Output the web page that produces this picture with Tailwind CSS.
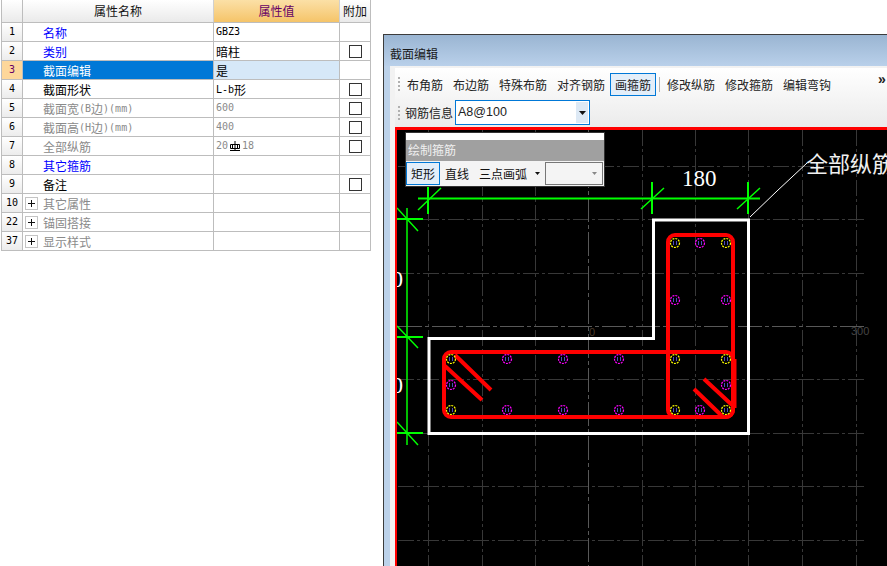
<!DOCTYPE html>
<html lang="zh">
<head>
<meta charset="utf-8">
<script src="https://cdn.jsdelivr.net/npm/@tailwindcss/browser@4"></script>
<title>截面编辑</title>
</head>
<body class="bg-white overflow-hidden">
<div class="w-[887px] h-[566px] overflow-hidden flex items-start font-['Noto_Sans_CJK_SC','Liberation_Sans',sans-serif] text-[12px] leading-none text-black">

  <!-- property table -->
  <div class="ml-px w-[370px] shrink-0 border-l border-[#bdbdbd]">
    <div class="flex h-[23px] border-b border-[#bdbdbd] text-[#111]">
      <div class="w-[21px] border-r border-[#bdbdbd] bg-gradient-to-b from-white to-[#eaeaea]"></div>
      <div class="w-[191px] border-r border-[#d0d0d0] bg-gradient-to-b from-white to-[#eaeaea] flex items-center justify-center">属性名称</div>
      <div class="w-[126px] border-r border-[#d0d0d0] bg-gradient-to-b from-[#fbe0a6] to-[#f5c468] text-[#660066] flex items-center justify-center">属性值</div>
      <div class="w-[31px] border-r border-[#bdbdbd] bg-gradient-to-b from-white to-[#eaeaea] flex items-center justify-center">附加</div>
    </div>

    <div class="flex h-[19px] border-b border-[#bdbdbd]">
      <div class="w-[21px] border-r border-[#bdbdbd] bg-gradient-to-b from-white to-[#ececec] flex items-center justify-center font-['DejaVu_Sans_Mono',monospace] text-[10px]">1</div>
      <div class="w-[191px] border-r border-[#bdbdbd] pl-5 pt-px flex items-center text-[#0000ff]">名称</div>
      <div class="w-[126px] border-r border-[#bdbdbd] pl-0.5 flex items-center font-['DejaVu_Sans_Mono',monospace] text-[10px]">GBZ3</div>
      <div class="w-[31px] border-r border-[#bdbdbd]"></div>
    </div>
    <div class="flex h-[19px] border-b border-[#bdbdbd]">
      <div class="w-[21px] border-r border-[#bdbdbd] bg-gradient-to-b from-white to-[#ececec] flex items-center justify-center font-['DejaVu_Sans_Mono',monospace] text-[10px]">2</div>
      <div class="w-[191px] border-r border-[#bdbdbd] pl-5 pt-px flex items-center text-[#0000ff]">类别</div>
      <div class="w-[126px] border-r border-[#bdbdbd] pl-0.5 pt-px flex items-center">暗柱</div>
      <div class="w-[31px] border-r border-[#bdbdbd] flex items-center justify-center"><span class="block w-[13px] h-[13px] border border-[#333] bg-white"></span></div>
    </div>
    <div class="flex h-[19px] border-b border-[#bdbdbd]">
      <div class="w-[21px] border-r border-[#bdbdbd] bg-[#fdd79a] text-[#660066] flex items-center justify-center font-['DejaVu_Sans_Mono',monospace] text-[10px]">3</div>
      <div class="w-[191px] border-r border-[#bdbdbd] pl-5 pt-px flex items-center bg-[#0078d7] text-white">截面编辑</div>
      <div class="w-[126px] border-r border-[#bdbdbd] pl-0.5 pt-px flex items-center bg-[#d6e8f8]">是</div>
      <div class="w-[31px] border-r border-[#bdbdbd]"></div>
    </div>
    <div class="flex h-[19px] border-b border-[#bdbdbd]">
      <div class="w-[21px] border-r border-[#bdbdbd] bg-gradient-to-b from-white to-[#ececec] flex items-center justify-center font-['DejaVu_Sans_Mono',monospace] text-[10px]">4</div>
      <div class="w-[191px] border-r border-[#bdbdbd] pl-5 pt-px flex items-center">截面形状</div>
      <div class="w-[126px] border-r border-[#bdbdbd] pl-0.5 pt-px flex items-center"><span class="font-['DejaVu_Sans_Mono',monospace] text-[10px]">L-b</span>形</div>
      <div class="w-[31px] border-r border-[#bdbdbd] flex items-center justify-center"><span class="block w-[13px] h-[13px] border border-[#333] bg-white"></span></div>
    </div>
    <div class="flex h-[19px] border-b border-[#bdbdbd] text-[#8a8a8a]">
      <div class="w-[21px] border-r border-[#bdbdbd] bg-gradient-to-b from-white to-[#ececec] text-black flex items-center justify-center font-['DejaVu_Sans_Mono',monospace] text-[10px]">5</div>
      <div class="w-[191px] border-r border-[#bdbdbd] pl-5 pt-px flex items-center">截面宽<span class="font-['DejaVu_Sans_Mono',monospace] text-[10px]">(B</span>边<span class="font-['DejaVu_Sans_Mono',monospace] text-[10px]">)(mm)</span></div>
      <div class="w-[126px] border-r border-[#bdbdbd] pl-0.5 flex items-center font-['DejaVu_Sans_Mono',monospace] text-[10px]">600</div>
      <div class="w-[31px] border-r border-[#bdbdbd] flex items-center justify-center"><span class="block w-[13px] h-[13px] border border-[#333] bg-white"></span></div>
    </div>
    <div class="flex h-[19px] border-b border-[#bdbdbd] text-[#8a8a8a]">
      <div class="w-[21px] border-r border-[#bdbdbd] bg-gradient-to-b from-white to-[#ececec] text-black flex items-center justify-center font-['DejaVu_Sans_Mono',monospace] text-[10px]">6</div>
      <div class="w-[191px] border-r border-[#bdbdbd] pl-5 pt-px flex items-center">截面高<span class="font-['DejaVu_Sans_Mono',monospace] text-[10px]">(H</span>边<span class="font-['DejaVu_Sans_Mono',monospace] text-[10px]">)(mm)</span></div>
      <div class="w-[126px] border-r border-[#bdbdbd] pl-0.5 flex items-center font-['DejaVu_Sans_Mono',monospace] text-[10px]">400</div>
      <div class="w-[31px] border-r border-[#bdbdbd] flex items-center justify-center"><span class="block w-[13px] h-[13px] border border-[#333] bg-white"></span></div>
    </div>
    <div class="flex h-[19px] border-b border-[#bdbdbd] text-[#8a8a8a]">
      <div class="w-[21px] border-r border-[#bdbdbd] bg-gradient-to-b from-white to-[#ececec] text-black flex items-center justify-center font-['DejaVu_Sans_Mono',monospace] text-[10px]">7</div>
      <div class="w-[191px] border-r border-[#bdbdbd] pl-5 pt-px flex items-center">全部纵筋</div>
      <div class="w-[126px] border-r border-[#bdbdbd] pl-0.5 flex items-center font-['DejaVu_Sans_Mono',monospace] text-[10px]">20<svg class="mx-0.5" width="10" height="11" viewBox="0 0 10 11"><path d="M0.500 3.500H9.500V7.500H0.500ZM5 0V9M2.500 3.500V7.500M7.500 3.500V7.500M0 9.500H10" fill="none" stroke="#000" stroke-width="1"/></svg>18</div>
      <div class="w-[31px] border-r border-[#bdbdbd] flex items-center justify-center"><span class="block w-[13px] h-[13px] border border-[#333] bg-white"></span></div>
    </div>
    <div class="flex h-[19px] border-b border-[#bdbdbd]">
      <div class="w-[21px] border-r border-[#bdbdbd] bg-gradient-to-b from-white to-[#ececec] flex items-center justify-center font-['DejaVu_Sans_Mono',monospace] text-[10px]">8</div>
      <div class="w-[191px] border-r border-[#bdbdbd] pl-5 pt-px flex items-center text-[#0000ff]">其它箍筋</div>
      <div class="w-[126px] border-r border-[#bdbdbd]"></div>
      <div class="w-[31px] border-r border-[#bdbdbd]"></div>
    </div>
    <div class="flex h-[19px] border-b border-[#bdbdbd]">
      <div class="w-[21px] border-r border-[#bdbdbd] bg-gradient-to-b from-white to-[#ececec] flex items-center justify-center font-['DejaVu_Sans_Mono',monospace] text-[10px]">9</div>
      <div class="w-[191px] border-r border-[#bdbdbd] pl-5 pt-px flex items-center">备注</div>
      <div class="w-[126px] border-r border-[#bdbdbd]"></div>
      <div class="w-[31px] border-r border-[#bdbdbd] flex items-center justify-center"><span class="block w-[13px] h-[13px] border border-[#333] bg-white"></span></div>
    </div>
    <div class="flex h-[19px] border-b border-[#bdbdbd] text-[#8a8a8a]">
      <div class="w-[21px] border-r border-[#bdbdbd] bg-gradient-to-b from-white to-[#ececec] text-black flex items-center justify-center font-['DejaVu_Sans_Mono',monospace] text-[10px]">10</div>
      <div class="w-[191px] border-r border-[#bdbdbd] pl-0.5 flex items-center gap-[5px]"><svg width="13" height="13" viewBox="0 0 13 13"><rect x=".5" y=".5" width="12" height="12" fill="#fff" stroke="#c4c4c4"/><path d="M3 6.500H10M6.500 3V10" stroke="#111"/></svg><span class="pt-px">其它属性</span></div>
      <div class="w-[126px] border-r border-[#bdbdbd]"></div>
      <div class="w-[31px] border-r border-[#bdbdbd]"></div>
    </div>
    <div class="flex h-[19px] border-b border-[#bdbdbd] text-[#8a8a8a]">
      <div class="w-[21px] border-r border-[#bdbdbd] bg-gradient-to-b from-white to-[#ececec] text-black flex items-center justify-center font-['DejaVu_Sans_Mono',monospace] text-[10px]">22</div>
      <div class="w-[191px] border-r border-[#bdbdbd] pl-0.5 flex items-center gap-[5px]"><svg width="13" height="13" viewBox="0 0 13 13"><rect x=".5" y=".5" width="12" height="12" fill="#fff" stroke="#c4c4c4"/><path d="M3 6.500H10M6.500 3V10" stroke="#111"/></svg><span class="pt-px">锚固搭接</span></div>
      <div class="w-[126px] border-r border-[#bdbdbd]"></div>
      <div class="w-[31px] border-r border-[#bdbdbd]"></div>
    </div>
    <div class="flex h-[19px] border-b border-[#bdbdbd] text-[#8a8a8a]">
      <div class="w-[21px] border-r border-[#bdbdbd] bg-gradient-to-b from-white to-[#ececec] text-black flex items-center justify-center font-['DejaVu_Sans_Mono',monospace] text-[10px]">37</div>
      <div class="w-[191px] border-r border-[#bdbdbd] pl-0.5 flex items-center gap-[5px]"><svg width="13" height="13" viewBox="0 0 13 13"><rect x=".5" y=".5" width="12" height="12" fill="#fff" stroke="#c4c4c4"/><path d="M3 6.500H10M6.500 3V10" stroke="#111"/></svg><span class="pt-px">显示样式</span></div>
      <div class="w-[126px] border-r border-[#bdbdbd]"></div>
      <div class="w-[31px] border-r border-[#bdbdbd]"></div>
    </div>
  </div>

  <!-- section editor window -->
  <div class="ml-[12px] mt-[34px] w-[504px] h-[532px] shrink-0 border-l border-t border-[#3c3c3c] flex flex-col">
    <div class="h-[31px] shrink-0 bg-gradient-to-b from-[#9ab5d2] to-[#b9d0ea] pl-[6px] pt-[6px] flex items-center text-[#1a1a1a]">截面编辑</div>
    <div class="flex-1 min-h-0 flex bg-[#bcd2ea] pl-[6px]">
      <div class="flex-1 min-w-0 flex flex-col bg-[#f2f2f2] pt-[2px] pl-[5px]">
        <!-- toolbars -->
        <div class="h-[59px] shrink-0 bg-gradient-to-b from-white to-[#ebebeb] text-[#222] flex flex-col">
          <div class="h-[32px] flex items-center relative">
            <svg class="ml-[3px] mr-[6px]" width="3" height="16" viewBox="0 0 3 16"><path d="M1 1V15" stroke="#b0b0b0" stroke-width="2" stroke-dasharray="2 2"/></svg>
            <span class="w-[46px] pt-px">布角筋</span>
            <span class="w-[46px] pt-px">布边筋</span>
            <span class="w-[58px] pt-px">特殊布筋</span>
            <span class="w-[53px] pt-px">对齐钢筋</span>
            <span class="w-[46px] h-[23px] pt-px border border-[#0078d7] bg-[#e3eef9] flex items-center justify-center">画箍筋</span>
            <span class="ml-[3px] mr-[7px] w-px h-[15px] bg-[#b5b5b5]"></span>
            <span class="w-[58px] pt-px">修改纵筋</span>
            <span class="w-[58px] pt-px">修改箍筋</span>
            <span class="w-[58px] pt-px">编辑弯钩</span>
            <span class="absolute left-[483px] top-[4px] text-[14px] font-bold font-['Liberation_Sans',sans-serif]">»</span>
          </div>
          <div class="h-[25px] flex items-center">
            <svg class="ml-[3px] mr-[4px]" width="3" height="16" viewBox="0 0 3 16"><path d="M1 1V15" stroke="#b0b0b0" stroke-width="2" stroke-dasharray="2 2"/></svg>
            <span class="w-[50px] text-[12px]">钢筋信息</span>
            <div class="w-[135px] h-[25px] border border-[#0078d7] bg-white flex items-center justify-between pl-[2px] font-['Liberation_Sans',sans-serif] text-[12.5px]">
              A8@100
              <span class="w-[12px] h-[21px] mr-px bg-[#dde9f5] flex items-center justify-center"><svg width="7" height="4" viewBox="0 0 7 4"><path d="M0 0H7L3.500 4Z" fill="#111"/></svg></span>
            </div>
          </div>
        </div>
        <!-- drawing canvas -->
        <div class="flex-1 min-h-0 relative border-l-2 border-t-[3px] border-[#ff0000] bg-black">
          <svg class="block" width="490" height="436" viewBox="397 130 490 436">
            <g stroke="#383838" stroke-width="1" stroke-dasharray="16 3 3 3" shape-rendering="crispEdges" fill="none">
              <path d="M428.500 130V566M482.500 130V566M535.500 130V566M642.500 130V566M695.500 130V566M748.500 130V566M802.500 130V566M856.500 130V566"/>
              <path d="M398 166.500H864M398 219.500H864M398 273.500H864M398 379.500H864M398 433.500H864M398 486.500H864M398 540.500H864"/>
            </g>
            <g stroke="#585858" stroke-width="1" stroke-dasharray="24 3 4 3" shape-rendering="crispEdges" fill="none">
              <path d="M588.500 130V566"/>
              <path d="M398 326.500H864"/>
            </g>
            <text x="589" y="336" fill="#4a3a2a" font-size="11" font-family="Liberation Sans">0</text>
            <text x="851" y="335" fill="#444" font-size="11" font-family="Liberation Sans">300</text>

            <!-- section outline -->
            <path d="M429 338.500H653.500V220H748.500V433.500H429Z" fill="none" stroke="#fff" stroke-width="3"/>

            <!-- dimensions -->
            <g stroke="#00ff00" fill="none">
              <path d="M418 198.500H760" stroke-width="2"/>
              <path d="M428 186V214M652 182V214M748 182V214" stroke-width="2"/>
              <path d="M418 210L441 188M641 209L664 188M737 209L760 188" stroke-width="1.500"/>
              <path d="M407 208V445" stroke-width="1.500"/>
              <path d="M397 219H423M397 337H423M397 433H423" stroke-width="2"/>
              <path d="M397 208L418 231M397 326L418 348M397 422L418 445" stroke-width="1.500"/>
            </g>
            <path d="M750 217L777 191L807 163" fill="none" stroke="#fff" stroke-width="1"/>
            <text x="682" y="186" fill="#fff" font-size="23" font-family="Liberation Serif">180</text>
            <text x="806" y="172" fill="#f0f0f0" font-size="22" font-family="Noto Sans CJK SC,serif">全部纵筋</text>
            <text x="391.500" y="287" fill="#fff" font-size="23" font-family="Liberation Serif">0</text>
            <text x="391.500" y="393" fill="#fff" font-size="23" font-family="Liberation Serif">0</text>

            <!-- stirrups -->
            <g fill="none" stroke="#ff0000" stroke-width="4">
              <rect x="668" y="235" width="65" height="182" rx="7"/>
              <rect x="444" y="352" width="289" height="65" rx="7"/>
              <path d="M734.500 359V408"/>
              <path d="M455 355L491 390M445 366L482 400"/>
              <path d="M704 379L732 405M694 389L722 416"/>
            </g>

            <!-- bars -->
            <g fill="none" stroke="#ffff00" stroke-width="1.200" stroke-dasharray="2 1">
              <circle cx="451" cy="359" r="4.500"/><circle cx="451" cy="410" r="4.500"/>
              <circle cx="675" cy="243" r="4.500"/><circle cx="726" cy="243" r="4.500"/>
              <circle cx="675" cy="359" r="4.500"/><circle cx="726" cy="359" r="4.500"/>
              <circle cx="675" cy="410" r="4.500"/><circle cx="726" cy="410" r="4.500"/>
            </g>
            <g fill="none" stroke="#ff00ff" stroke-width="1.200" stroke-dasharray="2 1">
              <circle cx="507" cy="359" r="4.500"/><circle cx="563" cy="359" r="4.500"/><circle cx="619" cy="359" r="4.500"/>
              <circle cx="507" cy="410" r="4.500"/><circle cx="563" cy="410" r="4.500"/><circle cx="619" cy="410" r="4.500"/>
              <circle cx="451" cy="385" r="4.500"/><circle cx="700" cy="243" r="4.500"/>
              <circle cx="675" cy="300" r="4.500"/><circle cx="726" cy="300" r="4.500"/>
              <circle cx="726" cy="385" r="4.500"/><circle cx="700" cy="410" r="4.500"/>
            </g>
            <g stroke="#4a4ac0" stroke-width="1" fill="none" shape-rendering="crispEdges">
              <path d="M449 357V361M452 357V361M449 408V412M452 408V412M673 241V245M676 241V245M724 241V245M727 241V245M673 357V361M676 357V361M724 357V361M727 357V361M673 408V412M676 408V412M724 408V412M727 408V412"/>
              <path d="M505 357V361M508 357V361M561 357V361M564 357V361M617 357V361M620 357V361M505 408V412M508 408V412M561 408V412M564 408V412M617 408V412M620 408V412M449 383V387M452 383V387M698 241V245M701 241V245M673 298V302M676 298V302M724 298V302M727 298V302M724 383V387M727 383V387M698 408V412M701 408V412"/>
            </g>
          </svg>

          <!-- floating palette -->
          <div class="absolute left-[8px] top-[2px] w-[200px] h-[55px] border border-[#333] bg-[#f4f4f4] flex flex-col">
            <div class="h-[7px] bg-white"></div>
            <div class="h-[21px] bg-[#a0a0a0] text-[#f0f0f0] pl-[2px] pb-[2px] flex items-center">绘制箍筋</div>
            <div class="flex-1 flex items-center text-[#111]">
              <span class="h-[23px] w-[34px] shrink-0 border border-[#0078d7] bg-[#e3eef9] flex items-center justify-center">矩形</span>
              <span class="ml-[5px] w-[34px] shrink-0">直线</span>
              <span class="w-[56px] shrink-0">三点画弧</span>
              <svg class="shrink-0 mr-[5px]" width="5" height="3" viewBox="0 0 5 3"><path d="M0 0H5L2.500 3Z" fill="#111"/></svg>
              <span class="w-[58px] h-[23px] shrink-0 border border-[#777] bg-[#f4f4f4] flex items-center justify-end pr-[5px]"><svg width="5" height="3" viewBox="0 0 5 3"><path d="M0 0H5L2.500 3Z" fill="#888"/></svg></span>
            </div>
          </div>
        </div>
      </div>
    </div>
  </div>
</div>
</body>
</html>
